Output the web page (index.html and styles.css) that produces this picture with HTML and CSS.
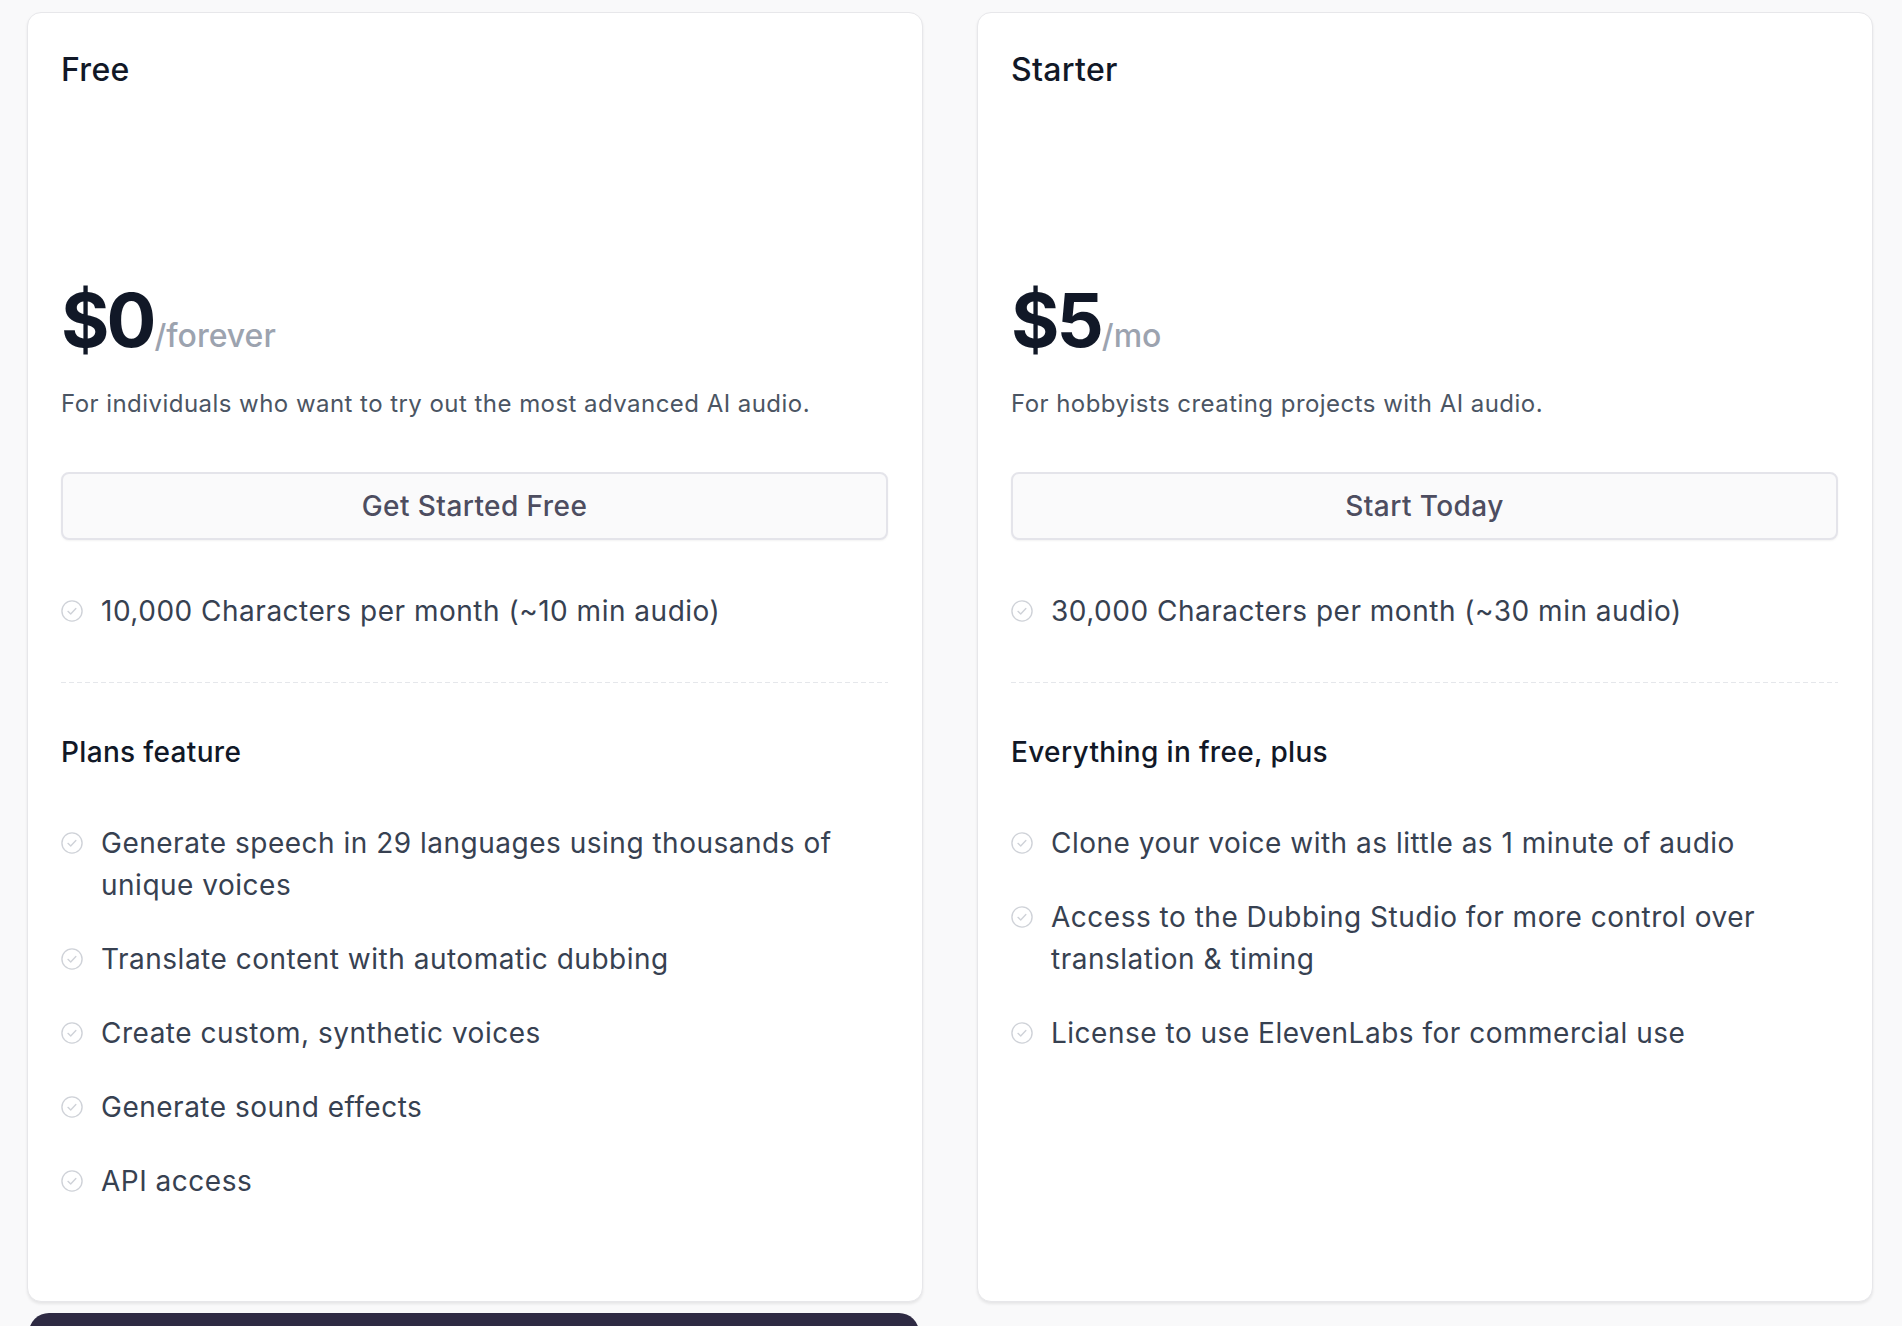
FILE: index.html
```html
<!DOCTYPE html>
<html lang="en">
<head>
    <meta charset="UTF-8">
    <meta name="viewport" content="width=device-width, initial-scale=1.0">
    <title>Pricing</title>
    <link rel="stylesheet" href="styles.css">
</head>
<body>
    <div class="plans">
        <!-- Free plan -->
        <div class="plan">
            <h2 class="plan-name">Free</h2>
            <div class="price"><span class="amount">$0</span><span class="period">/forever</span></div>
            <p class="plan-desc">For individuals who want to try out the most advanced AI audio.</p>
            <button class="plan-btn">Get Started Free</button>
            <ul class="features quota">
                <li><svg class="check" viewBox="0 0 24 24"><circle cx="12" cy="12" r="11"/><path d="M7.6 12.4l3 2.9 5.6-6"/></svg>10,000 Characters per month (~10 min audio)</li>
            </ul>
            <div class="divider"></div>
            <h3 class="features-title">Plans feature</h3>
            <ul class="features">
                <li><svg class="check" viewBox="0 0 24 24"><circle cx="12" cy="12" r="11"/><path d="M7.6 12.4l3 2.9 5.6-6"/></svg>Generate speech in 29 languages using thousands of unique voices</li>
                <li><svg class="check" viewBox="0 0 24 24"><circle cx="12" cy="12" r="11"/><path d="M7.6 12.4l3 2.9 5.6-6"/></svg>Translate content with automatic dubbing</li>
                <li><svg class="check" viewBox="0 0 24 24"><circle cx="12" cy="12" r="11"/><path d="M7.6 12.4l3 2.9 5.6-6"/></svg>Create custom, synthetic voices</li>
                <li><svg class="check" viewBox="0 0 24 24"><circle cx="12" cy="12" r="11"/><path d="M7.6 12.4l3 2.9 5.6-6"/></svg>Generate sound effects</li>
                <li><svg class="check" viewBox="0 0 24 24"><circle cx="12" cy="12" r="11"/><path d="M7.6 12.4l3 2.9 5.6-6"/></svg>API access</li>
            </ul>
        </div>

        <!-- Starter plan -->
        <div class="plan">
            <h2 class="plan-name">Starter</h2>
            <div class="price"><span class="amount">$5</span><span class="period">/mo</span></div>
            <p class="plan-desc">For hobbyists creating projects with AI audio.</p>
            <button class="plan-btn">Start Today</button>
            <ul class="features quota">
                <li><svg class="check" viewBox="0 0 24 24"><circle cx="12" cy="12" r="11"/><path d="M7.6 12.4l3 2.9 5.6-6"/></svg>30,000 Characters per month (~30 min audio)</li>
            </ul>
            <div class="divider"></div>
            <h3 class="features-title">Everything in free, plus</h3>
            <ul class="features">
                <li><svg class="check" viewBox="0 0 24 24"><circle cx="12" cy="12" r="11"/><path d="M7.6 12.4l3 2.9 5.6-6"/></svg>Clone your voice with as little as 1 minute of audio</li>
                <li><svg class="check" viewBox="0 0 24 24"><circle cx="12" cy="12" r="11"/><path d="M7.6 12.4l3 2.9 5.6-6"/></svg>Access to the Dubbing Studio for more control over translation &amp; timing</li>
                <li><svg class="check" viewBox="0 0 24 24"><circle cx="12" cy="12" r="11"/><path d="M7.6 12.4l3 2.9 5.6-6"/></svg>License to use ElevenLabs for commercial use</li>
            </ul>
        </div>

        <div class="next-plan"></div>
    </div>
</body>
</html>
```

FILE: styles.css
```css
html, body {
    overflow: hidden;
}
body {
    margin: 0;
    font-family: Inter, "Noto Sans", sans-serif;
    background-color: #f9f9fa;
    color: #111827;
}
.plans {
    display: grid;
    grid-template-columns: 1fr 1fr;
    column-gap: 54px;
    row-gap: 11px;
    padding: 12px 29px 0 27px;
}
.plan {
    display: flex;
    flex-direction: column;
    background-color: #fff;
    border: 1px solid #e7e7ea;
    border-radius: 14px;
    box-shadow: 0 2px 3px rgba(0, 0, 0, 0.08);
    padding: 33px 34px 99px 33px;
}
.plan-name {
    margin: 0;
    font-size: 32px;
    line-height: 48px;
    font-weight: 500;
    letter-spacing: 0.01em;
    color: #111827;
}
.price {
    margin-top: 189px;
    height: 74px;
    line-height: 74px;
    white-space: nowrap;
}
.amount {
    font-size: 74px;
    font-weight: 700;
    letter-spacing: -0.04em;
    color: #111827;
}
.period {
    font-size: 32px;
    font-weight: 500;
    color: #9ca3af;
    margin-left: 1px;
}
.plan-desc {
    margin: 29px 0 0 0;
    font-size: 24px;
    line-height: 36px;
    letter-spacing: 0.019em;
    color: #4b5563;
}
.plan-btn {
    margin-top: 50px;
    height: 68px;
    background-color: #fafafb;
    border: 2px solid #e4e4ea;
    border-radius: 8px;
    box-shadow: 0 1px 2px rgba(0, 0, 0, 0.05);
    font-family: inherit;
    font-size: 28px;
    font-weight: 500;
    letter-spacing: 0.015em;
    color: #4d4d60;
}
.features {
    list-style: none;
    margin: 49px 0 0 0;
    padding: 0;
    display: flex;
    flex-direction: column;
    gap: 32px;
}
.features.quota {
    margin-top: 50px;
}
.features li {
    display: flex;
    align-items: flex-start;
    font-size: 28px;
    line-height: 42px;
    letter-spacing: 0.018em;
    color: #374151;
}
.check {
    flex: none;
    width: 22px;
    height: 22px;
    margin: 10px 18px 0 0;
    fill: none;
    stroke: #cfd2d8;
    stroke-width: 1.5;
    stroke-linecap: round;
    stroke-linejoin: round;
}
.divider {
    margin-top: 50px;
    height: 1px;
    background: repeating-linear-gradient(to right, #e5e7eb 0 5px, transparent 5px 8px);
}
.features-title {
    margin: 48px 0 0 0;
    font-size: 28px;
    line-height: 42px;
    font-weight: 500;
    letter-spacing: 0.012em;
    color: #111827;
}
.next-plan {
    height: 80px;
    margin: 0 4px 0 2px;
    background-color: #2e2a43;
    border-radius: 20px 20px 0 0;
}
```
